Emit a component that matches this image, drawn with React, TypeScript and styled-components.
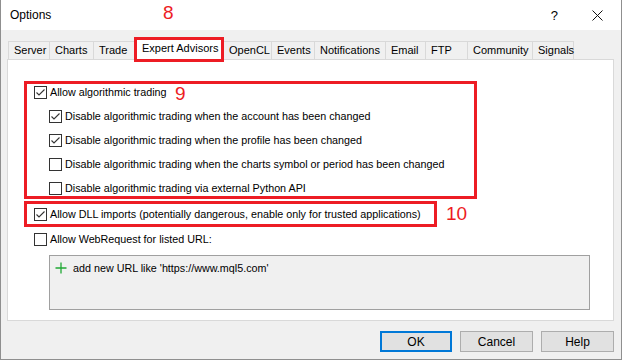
import React from 'react';
import styled, { createGlobalStyle } from 'styled-components';

const GlobalStyle = createGlobalStyle`
  html, body {
    margin: 0;
    padding: 0;
    background: #ffffff;
  }
  body {
    font-family: "Segoe UI", "Liberation Sans", Arial, sans-serif;
    font-size: 10.75px;
    color: #000000;
  }
`;

const RED = '#ed1c24';

const tabs = [
  { label: 'Server', width: 42 },
  { label: 'Charts', width: 45 },
  { label: 'Trade', width: 42 },
  { label: 'Expert Advisors', width: 90, active: true },
  { label: 'OpenCL', width: 49 },
  { label: 'Events', width: 44 },
  { label: 'Notifications', width: 72 },
  { label: 'Email', width: 41 },
  { label: 'FTP', width: 43 },
  { label: 'Community', width: 66 },
  { label: 'Signals', width: 42 },
];

const subOptions = [
  { label: 'Disable algorithmic trading when the account has been changed', checked: true },
  { label: 'Disable algorithmic trading when the profile has been changed', checked: true },
  { label: 'Disable algorithmic trading when the charts symbol or period has been changed', checked: false },
  { label: 'Disable algorithmic trading via external Python API', checked: false },
];

const CheckBox = ({ checked }: { checked?: boolean }) => (
  <Box>
    {checked && (
      <svg width="11" height="11" viewBox="0 0 11 11">
        <path d="M1.5 5.5 L4 8 L9.5 2.5" fill="none" stroke="#333333" strokeWidth="1.1" />
      </svg>
    )}
  </Box>
);

const App = () => {
  return (
    <>
      <GlobalStyle />
      <Window>
        <TitleBar>
          <Title>Options</Title>
          <TitleButtons>
            <HelpMark>?</HelpMark>
            <svg width="11" height="11" viewBox="0 0 11 11">
              <path d="M0.5 0.5 L10.5 10.5 M10.5 0.5 L0.5 10.5" stroke="#111111" strokeWidth="1" />
            </svg>
          </TitleButtons>
        </TitleBar>
        <Body>
          <TabRow>
            {tabs.map((t) => (
              <Tab key={t.label} $active={t.active} $width={t.width}>
                {t.label}
                {t.active && <Marker $left={28} $top={-35}>8</Marker>}
              </Tab>
            ))}
          </TabRow>
          <Panel>
            <Highlight>
              <Row>
                <CheckBox checked />
                <span>Allow algorithmic trading</span>
              </Row>
              {subOptions.map((o) => (
                <Row key={o.label} $indent>
                  <CheckBox checked={o.checked} />
                  <span>{o.label}</span>
                </Row>
              ))}
              <Marker $left={148} $top={0}>9</Marker>
            </Highlight>
            <MarkedLine>
              <SingleHighlight>
                <Row>
                  <CheckBox checked />
                  <span>Allow DLL imports (potentially dangerous, enable only for trusted applications)</span>
                </Row>
              </SingleHighlight>
              <InlineMarker>10</InlineMarker>
            </MarkedLine>
            <PlainRow>
              <CheckBox />
              <span>Allow WebRequest for listed URL:</span>
            </PlainRow>
            <UrlList>
              <UrlItem>
                <svg width="12" height="12" viewBox="0 0 12 12">
                  <path d="M6 0.5 V11.5 M0.5 6 H11.5" stroke="#1fa834" strokeWidth="1.3" />
                </svg>
                <span>add new URL like 'https://www.mql5.com'</span>
              </UrlItem>
            </UrlList>
          </Panel>
          <ButtonRow>
            <Button $default>OK</Button>
            <Button>Cancel</Button>
            <Button>Help</Button>
          </ButtonRow>
        </Body>
      </Window>
    </>
  );
};

const Window = styled.div`
  width: 622px;
  height: 360px;
  box-sizing: border-box;
  border: 1px solid #8f8f8f;
  border-top: none;
  background: #f0f0f0;
  display: flex;
  flex-direction: column;
  overflow: hidden;
`;

const TitleBar = styled.div`
  height: 30px;
  background: #ffffff;
  display: flex;
  align-items: center;
  justify-content: space-between;
  padding: 0 18px 0 9px;
  flex-shrink: 0;
`;

const Title = styled.div`
  font-size: 12px;
`;

const TitleButtons = styled.div`
  display: flex;
  align-items: center;
  gap: 34px;
`;

const HelpMark = styled.span`
  font-size: 13px;
`;

const Body = styled.div`
  flex: 1;
  display: flex;
  flex-direction: column;
  padding: 7px 7px 0 6px;
`;

const TabRow = styled.div`
  display: flex;
  align-items: flex-end;
  padding-left: 2px;
`;

const Tab = styled.div<{ $active?: boolean; $width: number }>`
  position: relative;
  box-sizing: border-box;
  width: ${(p) => p.$width}px;
  height: ${(p) => (p.$active ? 25 : 18)}px;
  margin-bottom: ${(p) => (p.$active ? -3 : 0)}px;
  z-index: ${(p) => (p.$active ? 2 : 0)};
  padding: ${(p) => (p.$active ? '4px 0 0 7px' : '2px 0 0 5px')};
  background: ${(p) => (p.$active ? '#ffffff' : '#f0f0f0')};
  border: 1px solid #d9d9d9;
  border-bottom: none;
  margin-left: -1px;
  outline: ${(p) => (p.$active ? `3px solid ${RED}` : 'none')};
  outline-offset: -3px;
  white-space: nowrap;
  font-size: 11px;
`;

const Marker = styled.div<{ $left: number; $top: number }>`
  position: absolute;
  left: ${(p) => p.$left}px;
  top: ${(p) => p.$top}px;
  color: ${RED};
  font-family: "Liberation Sans", Arial, sans-serif;
  font-size: 19px;
  line-height: 20px;
`;

const Panel = styled.div`
  flex: 1;
  max-height: 262px;
  box-sizing: border-box;
  background: #ffffff;
  border: 1px solid #d9d9d9;
  padding: 21px 40px 0 16px;
  display: flex;
  flex-direction: column;
  align-items: flex-start;
`;

const Highlight = styled.div`
  position: relative;
  width: 453px;
  box-sizing: border-box;
  border: 3px solid ${RED};
  padding: 0 7px;
  display: flex;
  flex-direction: column;
  gap: 8px;
`;

const MarkedLine = styled.div`
  display: flex;
  align-items: center;
  gap: 9px;
  margin-top: 2px;
`;

const SingleHighlight = styled.div`
  width: 413px;
  box-sizing: border-box;
  border: 3px solid ${RED};
  padding: 2px 7px;
`;

const InlineMarker = styled.span`
  color: ${RED};
  font-family: "Liberation Sans", Arial, sans-serif;
  font-size: 19px;
  line-height: 20px;
`;

const Row = styled.div<{ $indent?: boolean }>`
  display: flex;
  align-items: center;
  gap: 3px;
  height: 16px;
  margin-left: ${(p) => (p.$indent ? 15 : 0)}px;
  white-space: nowrap;
`;

const PlainRow = styled(Row)`
  margin: 4px 0 0 10px;
`;

const Box = styled.div`
  width: 13px;
  height: 13px;
  box-sizing: border-box;
  border: 1px solid #333333;
  background: #ffffff;
  display: flex;
  align-items: center;
  justify-content: center;
  flex-shrink: 0;
`;

const UrlList = styled.div`
  margin: 8px 0 0 25px;
  width: 541px;
  height: 55px;
  box-sizing: border-box;
  border: 1px solid #a0a0a0;
  background: #f0f0f0;
  padding: 6px 0 0 5px;
`;

const UrlItem = styled.div`
  display: flex;
  align-items: center;
  gap: 6px;
`;

const ButtonRow = styled.div`
  display: flex;
  justify-content: flex-end;
  gap: 8px;
  padding: 10px 0 0;
`;

const Button = styled.button<{ $default?: boolean }>`
  width: ${(p) => (p.$default ? 72 : 73)}px;
  height: 21px;
  box-sizing: border-box;
  background: #e1e1e1;
  border: ${(p) => (p.$default ? '2px solid #0078d7' : '1px solid #adadad')};
  font-family: inherit;
  font-size: 12px;
  color: #000000;
  padding: 0;
`;

export default App;
